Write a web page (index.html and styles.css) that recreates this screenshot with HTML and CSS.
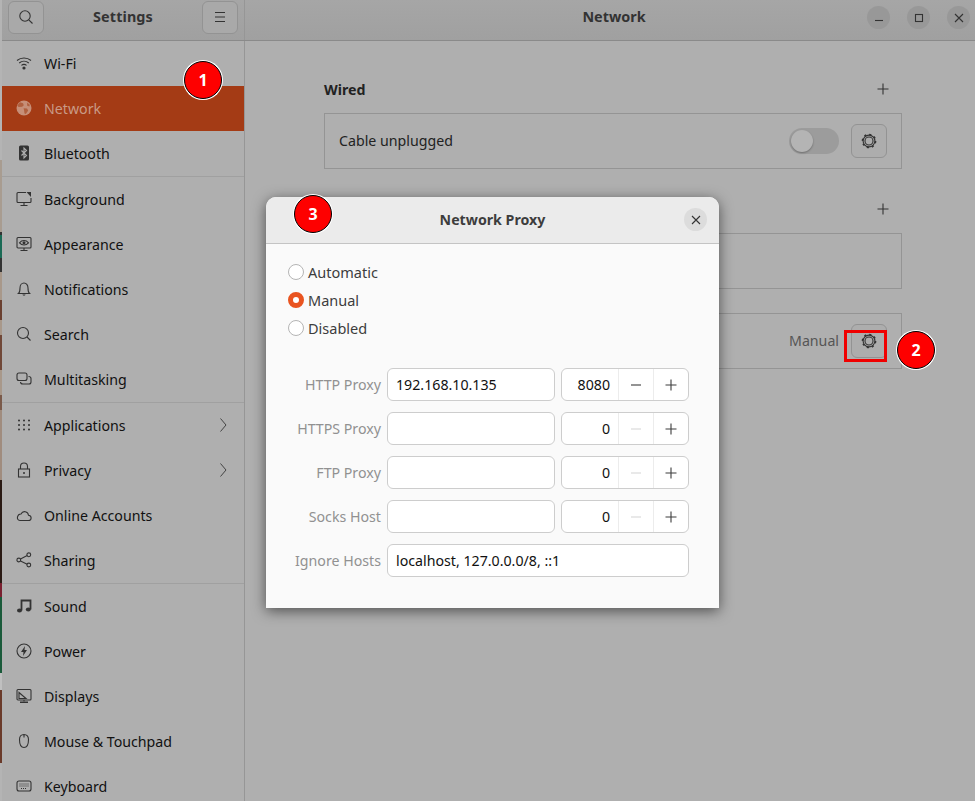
FILE: index.html
```html
<!DOCTYPE html>
<html lang="en">
<head>
    <meta charset="UTF-8">
    <title>Network Settings</title>
    <link rel="stylesheet" href="styles.css">
</head>
<body>
    <div class="wallpaper"></div>
    <div class="window">
        <header class="titlebar">
            <div class="title-left">
                <button class="head-btn">
                    <svg class="ic" viewBox="0 0 16 16"><circle cx="7" cy="7" r="5.2"/><path d="M10.8 10.8l3.7 3.7"/></svg>
                </button>
                <span class="app-title">Settings</span>
                <button class="head-btn">
                    <svg class="ic" viewBox="0 0 16 16"><path d="M3 3.5h10M3 8h10M3 12.5h10"/></svg>
                </button>
            </div>
            <div class="title-right">
                <span class="page-title">Network</span>
                <div class="win-btns">
                    <span class="win-btn"><svg class="ic" viewBox="0 0 16 16"><path d="M4 10.5h8"/></svg></span>
                    <span class="win-btn"><svg class="ic" viewBox="0 0 16 16"><rect x="4.5" y="4.5" width="7" height="7"/></svg></span>
                    <span class="win-btn"><svg class="ic" viewBox="0 0 16 16"><path d="M4 4l8 8M12 4l-8 8"/></svg></span>
                </div>
            </div>
        </header>

        <div class="content">
            <nav class="sidebar">
                <a class="row"><svg class="ic" viewBox="0 0 16 16"><path d="M1 5.500c4-3.400 10-3.400 14 0M3.200 8c2.800-2.300 6.800-2.300 9.600 0M5.400 10.400c1.600-1.200 3.600-1.200 5.200 0"/><circle class="fill" cx="8" cy="13" r="1.600"/></svg>Wi-Fi</a>
                <a class="row active"><svg class="ic" viewBox="0 0 16 16"><circle class="fill" cx="8" cy="8" r="7.500"/><path class="cut" d="M4 2.300l3 .9.800 2-1.600 1.600-3.600.2-1.400-1.400zM7.600 8.200l3.400.2 1.200 2-2.400 3.600-1.300-.4-.4-3zM11 2.500l2.800 2.300-.4 1.700-2.200-.8z"/></svg>Network</a>
                <a class="row"><svg class="ic" viewBox="0 0 16 16"><rect class="fill" x="3" y="0.500" width="10" height="15" rx="1.500"/><path class="cut-line" d="M5.500 5.500l5 5L8 13V3l2.500 2.500-5 5"/></svg>Bluetooth</a>
                <div class="sep"></div>
                <a class="row"><svg class="ic" viewBox="0 0 16 16"><path d="M10 1.500H2a1 1 0 0 0-1 1v8a1 1 0 0 0 1 1h12a1 1 0 0 0 1-1V7M8 11.500v2.500M4.500 14.500h7"/><path class="fill" d="M10.500 1h4.500v5z"/></svg>Background</a>
                <a class="row"><svg class="ic" viewBox="0 0 16 16"><rect x="1" y="1.500" width="14" height="10.500" rx="1"/><path d="M3.500 6.800c2.500-3 6.500-3 9 0-2.500 3-6.500 3-9 0zM8 12v2M4.500 14.500h7"/><circle class="fill" cx="8" cy="6.800" r="1.500"/></svg>Appearance</a>
                <a class="row"><svg class="ic" viewBox="0 0 16 16"><path d="M2.500 12.500h11c-1.300-1-1.500-2.500-1.500-5.500 0-2.800-1.800-5-4-5S4 4.200 4 7c0 3-.2 4.500-1.500 5.500z"/><path class="fill" d="M6.500 13.500h3c0 1.500-3 1.500-3 0z"/></svg>Notifications</a>
                <a class="row"><svg class="ic" viewBox="0 0 16 16"><circle cx="7" cy="7" r="5.500"/><path d="M11 11l3.500 3.500"/></svg>Search</a>
                <a class="row"><svg class="ic" viewBox="0 0 16 16"><rect x="1" y="2" width="10" height="7.500" rx="2"/><path d="M12.500 5.500c1.400 0 2.500.6 2.500 2v3.500c0 1.200-1 2-2 2H7c-1.500 0-2.500-1-2.500-2"/></svg>Multitasking</a>
                <div class="sep"></div>
                <a class="row"><svg class="ic" viewBox="0 0 16 16"><path class="dots" d="M3 3.500h.01M8 3.500h.01M13 3.500h.01M3 8h.01M8 8h.01M13 8h.01M3 12.500h.01M8 12.500h.01M13 12.500h.01"/></svg>Applications<svg class="chev" viewBox="0 0 8 16"><path d="M1.500 1.500L7 8l-5.500 6.500"/></svg></a>
                <a class="row"><svg class="ic" viewBox="0 0 16 16"><rect x="2.500" y="7" width="11" height="8"/><path d="M4.500 7V4.500a3.500 3.500 0 0 1 7 0V7"/><circle class="fill" cx="8" cy="11" r="1"/></svg>Privacy<svg class="chev" viewBox="0 0 8 16"><path d="M1.500 1.500L7 8l-5.500 6.500"/></svg></a>
                <a class="row"><svg class="ic" viewBox="0 0 16 16"><path d="M4 13.500h8.500c3.500 0 3.500-5 0-5.300C12 4.500 7 3 5 7 1.500 6.800-.5 13 4 13.500z"/></svg>Online Accounts</a>
                <a class="row"><svg class="ic" viewBox="0 0 16 16"><circle cx="2.800" cy="8" r="1.900"/><circle cx="12.800" cy="2.800" r="1.900"/><circle cx="12.800" cy="13" r="1.900"/><path d="M4.500 7l6.700-3.400M4.500 9l6.700 3.200"/></svg>Sharing</a>
                <div class="sep"></div>
                <a class="row"><svg class="ic" viewBox="0 0 16 16"><path d="M5.500 12.500V2.500h9v9" stroke-width="1.800"/><ellipse class="fill" cx="3.500" cy="12.500" rx="2.500" ry="2"/><ellipse class="fill" cx="12.300" cy="11.500" rx="2.500" ry="2"/></svg>Sound</a>
                <a class="row"><svg class="ic" viewBox="0 0 16 16"><circle cx="8" cy="8" r="7"/><path class="fill" d="M9 3L5 9h2.500L7 13l4-6H8.500z"/></svg>Power</a>
                <a class="row"><svg class="ic" viewBox="0 0 16 16"><rect x="1" y="1.500" width="14" height="10.500" rx="1"/><path d="M3 4.500l7 6H3zM8 12v1.500"/><path class="fill" d="M4 13.500h8V15H4z"/></svg>Displays</a>
                <a class="row"><svg class="ic" viewBox="0 0 16 16"><path d="M8 1.500c-3 0-4.500 2-4.500 5 0 5 1 8 4.500 8s4.500-3 4.500-8c0-3-1.500-5-4.500-5zM8 1.500v3"/></svg>Mouse &amp; Touchpad</a>
                <a class="row"><svg class="ic" viewBox="0 0 16 16"><rect x="1" y="3" width="14" height="10" rx="2"/><path class="dots-sm" d="M3.500 6h9M3.500 8h9M5 10.500h6"/></svg>Keyboard</a>
            </nav>

            <main class="main">
                <section class="group">
                    <div class="group-head"><h2>Wired</h2><svg class="ic plus" viewBox="0 0 16 16"><path d="M8 2.500v11M2.500 8h11"/></svg></div>
                    <div class="card">
                        <span class="card-label">Cable unplugged</span>
                        <span class="switch"><span class="knob"></span></span>
                        <button class="gear-btn">
                            <svg class="ic gear" viewBox="0 0 16 16"><circle cx="8" cy="8" r="4"/><circle cx="8" cy="8" r="5.900"/><circle class="teeth" cx="8" cy="8" r="6.600"/></svg>
                        </button>
                    </div>
                </section>
                <section class="group">
                    <div class="group-head"><h2>VPN</h2><svg class="ic plus" viewBox="0 0 16 16"><path d="M8 2.500v11M2.500 8h11"/></svg></div>
                    <div class="card"></div>
                </section>
                <div class="card">
                    <span class="card-value">Manual</span>
                    <button class="gear-btn">
                        <svg class="ic gear" viewBox="0 0 16 16"><circle cx="8" cy="8" r="4"/><circle cx="8" cy="8" r="5.900"/><circle class="teeth" cx="8" cy="8" r="6.600"/></svg>
                    </button>
                </div>
            </main>
        </div>
    </div>

    <!-- proxy dialog, sits over the dimmed window -->
    <div class="dialog">
        <div class="dialog-head">
            <span class="dialog-title">Network Proxy</span>
            <span class="dialog-close"><svg class="ic" viewBox="0 0 16 16"><path d="M4 4l8 8M12 4l-8 8"/></svg></span>
        </div>
        <div class="dialog-body">
            <div class="radios">
                <label class="radio"><span class="dot"></span>Automatic</label>
                <label class="radio"><span class="dot on"></span>Manual</label>
                <label class="radio"><span class="dot"></span>Disabled</label>
            </div>
            <div class="proxy-form">
                <span class="field-label">HTTP Proxy</span>
                <span class="input">192.168.10.135</span>
                <div class="spin"><span class="spin-val">8080</span><span class="spin-btn"><svg class="ic" viewBox="0 0 16 16"><path d="M3 8h10"/></svg></span><span class="spin-btn"><svg class="ic" viewBox="0 0 16 16"><path d="M8 2.500v11M2.500 8h11"/></svg></span></div>

                <span class="field-label">HTTPS Proxy</span>
                <span class="input"></span>
                <div class="spin"><span class="spin-val">0</span><span class="spin-btn off"><svg class="ic" viewBox="0 0 16 16"><path d="M3 8h10"/></svg></span><span class="spin-btn"><svg class="ic" viewBox="0 0 16 16"><path d="M8 2.500v11M2.500 8h11"/></svg></span></div>

                <span class="field-label">FTP Proxy</span>
                <span class="input"></span>
                <div class="spin"><span class="spin-val">0</span><span class="spin-btn off"><svg class="ic" viewBox="0 0 16 16"><path d="M3 8h10"/></svg></span><span class="spin-btn"><svg class="ic" viewBox="0 0 16 16"><path d="M8 2.500v11M2.500 8h11"/></svg></span></div>

                <span class="field-label">Socks Host</span>
                <span class="input"></span>
                <div class="spin"><span class="spin-val">0</span><span class="spin-btn off"><svg class="ic" viewBox="0 0 16 16"><path d="M3 8h10"/></svg></span><span class="spin-btn"><svg class="ic" viewBox="0 0 16 16"><path d="M8 2.500v11M2.500 8h11"/></svg></span></div>

                <span class="field-label">Ignore Hosts</span>
                <span class="input wide">localhost, 127.0.0.0/8, ::1</span>
            </div>
        </div>
    </div>

    <!-- tutorial marks drawn on top of the screenshot -->
    <span class="badge badge-1">1</span>
    <span class="badge badge-2">2</span>
    <span class="badge badge-3">3</span>
    <span class="red-box"></span>
</body>
</html>
```

FILE: styles.css
```css
* {
    box-sizing: border-box;
}

html, body {
    height: 100%;
}

body {
    margin: 0;
    overflow: hidden;
    font-family: "Noto Sans", "Open Sans", sans-serif;
    font-size: 14.2px;
    color: #111;
    background: #b4b4b4;
    position: relative;
}

/* sliver of desktop left of the window */
.wallpaper {
    position: absolute;
    left: 0;
    top: 160px;
    width: 2px;
    height: 603px;
    background: linear-gradient(
        #a89c90 0 72px, #333 72px 75px, #1a6a55 75px 98px, #333 98px 112px,
        #a8988a 112px 140px, #6a4030 140px 160px, #a8988a 160px 175px,
        #704838 175px 210px, #a8988a 210px 235px, #7a5a4a 235px 250px,
        #a08c7e 250px 320px, #2a1a14 320px 423px, #7a2030 423px 437px,
        #1a5a3a 437px 513px, #c0c0c0 513px 530px, #6a3a2a 530px 603px
    );
}

.window {
    position: absolute;
    left: 2px;
    top: 0;
    width: 973px;
    height: 801px;
    background: #afafaf;
    display: flex;
    flex-direction: column;
}

/* title bar */
.titlebar {
    height: 41px;
    flex: none;
    display: flex;
    background: linear-gradient(#a6a6a6, #a0a0a0);
    border-bottom: 1px solid #8a8a8a;
}

.title-left {
    width: 243px;
    flex: none;
    display: flex;
    align-items: center;
    justify-content: space-between;
    padding: 0 6px 6px 6px;
    border-right: 1px solid #969696;
}

.app-title, .page-title {
    font-weight: 700;
    font-size: 14.4px;
    color: #333;
}

.app-title {
    margin-top: -1px;
    letter-spacing: 0.1px;
}

.head-btn {
    width: 36px;
    height: 33px;
    padding: 0;
    display: flex;
    align-items: center;
    justify-content: center;
    background: #a9a9a9;
    border: 1px solid #939393;
    border-radius: 6px;
}

.ic {
    width: 16px;
    height: 16px;
    flex: none;
    fill: none;
    stroke: #333;
    stroke-width: 1.1;
}

.ic .fill {
    fill: #333;
    stroke: none;
}

.ic .dots {
    stroke-width: 2;
    stroke-linecap: round;
}

.ic .dots-sm {
    stroke-width: 1.2;
    stroke-dasharray: 1 1;
}

.ic .teeth {
    stroke-width: 1.5;
    stroke-dasharray: 2.2 2.98;
}

.title-right {
    flex: 1;
    display: flex;
    align-items: center;
    justify-content: center;
    position: relative;
    padding: 0 0 7px 8px;
}

.win-btns {
    position: absolute;
    right: 5px;
    top: 6px;
    display: flex;
    gap: 17px;
}

.win-btn {
    width: 23px;
    height: 23px;
    border-radius: 50%;
    background: #989898;
    display: flex;
    align-items: center;
    justify-content: center;
}

/* sidebar */
.content {
    flex: 1;
    display: flex;
    min-height: 0;
}

.sidebar {
    width: 243px;
    flex: none;
    border-right: 1px solid #969696;
    overflow: hidden;
}

.row {
    height: 45px;
    display: flex;
    align-items: center;
    gap: 12px;
    padding: 0 17px 1px 14px;
    color: #111;
}

.row .chev {
    width: 8px;
    height: 16px;
    margin-left: auto;
    fill: none;
    stroke: #444;
    stroke-width: 1;
}

.row.active {
    background: #a43b15;
    color: #c99a86;
}

.row.active .ic {
    stroke: none;
}

.row.active .fill {
    fill: #c68f78;
}

.row.active .cut {
    fill: #b0603f;
    stroke: none;
}

.ic .cut-line {
    stroke: #afafaf;
}

.sep {
    height: 1px;
    background: #a0a0a0;
}

/* main panel */
.main {
    flex: 1;
    padding: 36px 73px 0 79px;
}

.group {
    margin-bottom: 28px;
}

.group + .group {
    margin-bottom: 24px;
}

.group-head {
    display: flex;
    align-items: center;
    justify-content: space-between;
    height: 24px;
    padding-right: 11px;
    margin-bottom: 12px;
}

.group-head h2 {
    margin: 0;
    font-size: 14.2px;
    font-weight: 700;
    color: #222;
}

.card {
    height: 56px;
    display: flex;
    align-items: center;
    justify-content: flex-end;
    padding: 0 14px;
    border: 1px solid #949494;
}

.card-label {
    flex: 1;
    color: #222;
    margin-bottom: 2px;
}

.card-value {
    color: #555;
    margin-right: 12px;
    margin-bottom: 2px;
}

.switch {
    width: 50px;
    height: 26px;
    border-radius: 13px;
    background: #9c9c9c;
    padding: 2px;
    margin-right: 12px;
}

.knob {
    display: block;
    width: 22px;
    height: 22px;
    border-radius: 50%;
    background: #b4b4b4;
    box-shadow: 0 1px 2px rgba(0, 0, 0, 0.3);
}

.gear-btn {
    width: 36px;
    height: 34px;
    padding: 0;
    display: flex;
    align-items: center;
    justify-content: center;
    background: #adadad;
    border: 1px solid #939393;
    border-radius: 6px;
}

/* dialog */
.dialog {
    position: absolute;
    left: 266px;
    top: 197px;
    width: 453px;
    height: 411px;
    background: #fafafa;
    border-radius: 10px 10px 0 0;
    box-shadow: 0 3px 14px rgba(0, 0, 0, 0.55);
    display: flex;
    flex-direction: column;
}

.dialog-head {
    height: 47px;
    flex: none;
    display: flex;
    align-items: center;
    justify-content: center;
    position: relative;
    padding-bottom: 2px;
    background: #ebebeb;
    border-bottom: 1px solid #c4c4c4;
    border-radius: 10px 10px 0 0;
}

.dialog-title {
    font-weight: 700;
    color: #3d3d3d;
}

.dialog-close {
    position: absolute;
    right: 12px;
    top: 11px;
    width: 23px;
    height: 23px;
    border-radius: 50%;
    background: #dcdcdc;
    display: flex;
    align-items: center;
    justify-content: center;
}

.dialog-body {
    padding: 14px 30px 0 22px;
}

.radios {
    display: flex;
    flex-direction: column;
    margin-bottom: 26px;
}

.radio {
    height: 28px;
    display: flex;
    align-items: center;
    gap: 4px;
    font-size: 14.5px;
    color: #3d3d3d;
}

.dot {
    width: 16px;
    height: 16px;
    border-radius: 50%;
    background: #fff;
    border: 1px solid #b5b5b5;
}

.dot.on {
    border: 5px solid #e95420;
    background: #fff;
}

.proxy-form {
    display: grid;
    grid-template-columns: 93px 168px 128px;
    column-gap: 6px;
    row-gap: 11px;
    align-items: center;
}

.field-label {
    text-align: right;
    color: #919191;
    margin-bottom: 1px;
}

.input {
    height: 33px;
    background: #fff;
    border: 1px solid #cdcdcd;
    border-radius: 6px;
    padding: 0 8px;
    line-height: 31px;
    color: #111;
}

.input.wide {
    grid-column: 2 / 4;
}

.spin {
    height: 33px;
    display: flex;
    background: #fff;
    border: 1px solid #cdcdcd;
    border-radius: 6px;
}

.spin-val {
    flex: 1;
    text-align: right;
    line-height: 31px;
    padding-right: 8px;
    color: #111;
}

.spin-btn {
    width: 35px;
    display: flex;
    align-items: center;
    justify-content: center;
    border-left: 1px solid #ececec;
}

.spin-btn .ic {
    stroke: #3d3d3d;
}

.spin-btn.off .ic {
    stroke: #d8d8d8;
}

/* annotations */
.badge {
    position: absolute;
    width: 38px;
    height: 38px;
    border-radius: 50%;
    background: #fe0000;
    color: #fff;
    font-weight: 700;
    font-size: 16px;
    display: flex;
    align-items: center;
    justify-content: center;
    border: 1px solid #000;
    box-shadow: 0 0 0 1px #fff;
}

.badge-1 {
    left: 184px;
    top: 61px;
}

.badge-2 {
    left: 897px;
    top: 331px;
}

.badge-3 {
    left: 294px;
    top: 195px;
}

.red-box {
    position: absolute;
    left: 844px;
    top: 330px;
    width: 43px;
    height: 32px;
    border: 3px solid #f00000;
}
```
